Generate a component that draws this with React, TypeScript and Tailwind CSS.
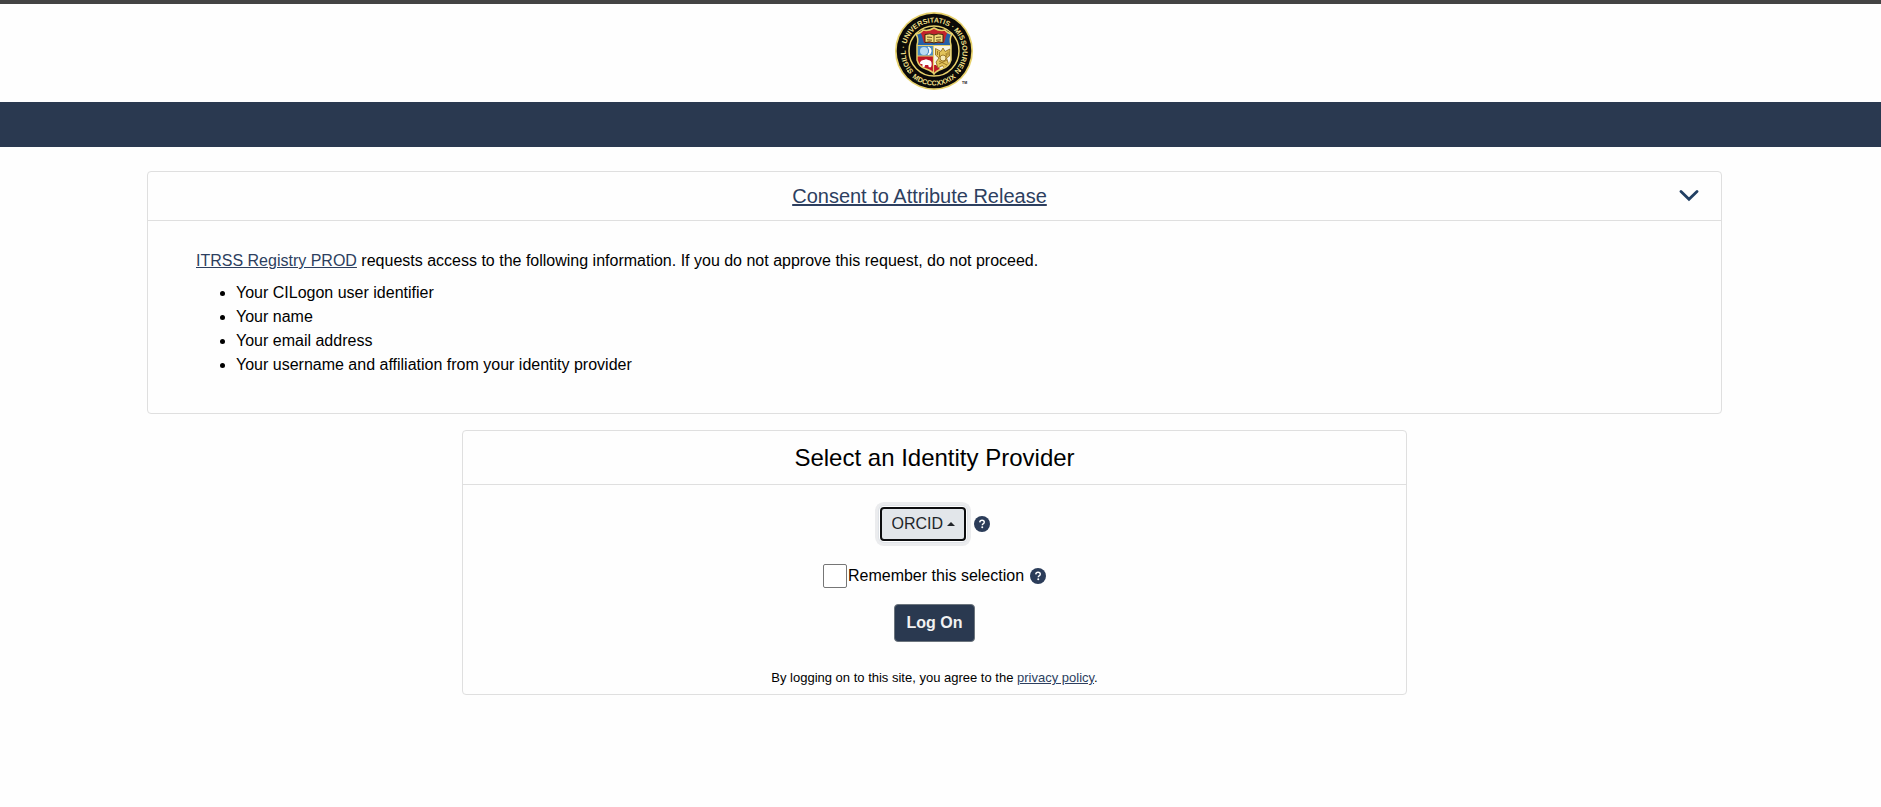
import { useState, type ReactNode } from 'react'

const attributes = [
    'Your CILogon user identifier',
    'Your name',
    'Your email address',
    'Your username and affiliation from your identity provider',
]

function Seal() {
    return (
        <svg viewBox="0 0 78 78" className="size-[78px]" role="img" aria-label="University of Missouri seal">
            <defs>
                <path id="ring-top" d="M39 39 m-17.5 22.5 a28.5 28.5 0 1 1 35 0" />
                <path id="ring-bottom" d="M11 59 A34.4 34.4 0 0 0 67 59" />
                <clipPath id="shield">
                    <path d="M21 22 Q26 21 28 18 Q33 19.500 39 16 Q45 19.500 50 18 Q52 21 57 22 Q54 27 56 33 L56 48 Q54 55 47 57 Q41 59 39 62 Q37 59 31 57 Q24 55 22 48 L22 33 Q24 27 21 22 Z" />
                </clipPath>
            </defs>
            <circle cx="39" cy="39" r="39" fill="#e6d06a" />
            <circle cx="39" cy="39" r="37.300" fill="#0b0a08" />
            <circle cx="39" cy="39" r="25" fill="none" stroke="#e6d06a" strokeWidth="1.500" />
            <g fill="#f3e08a" fontFamily="Liberation Sans, sans-serif" fontWeight="700" fontSize="7.100">
                <text textAnchor="middle">
                    <textPath href="#ring-top" startOffset="50%">SIGILL · UNIVERSITATIS · MISSOURIEN</textPath>
                </text>
                <text textAnchor="middle">
                    <textPath href="#ring-bottom" startOffset="50%">MDCCCXXXIX</textPath>
                </text>
            </g>
            <circle cx="13" cy="59" r="1" fill="#ead77c" />
            <circle cx="65" cy="59" r="1" fill="#ead77c" />

            <g>
                <g clipPath="url(#shield)">
                    <rect x="18" y="14" width="42" height="50" fill="#f8f4e6" />
                    <rect x="18" y="14" width="42" height="19" fill="#2660a8" />
                    <path d="M23 14 H55 L51 24 L49 31 H29 L27 24 Z" fill="#c3242d" />
                    <rect x="18" y="34" width="20" height="10" fill="#4a8cc6" />
                    <rect x="18" y="44" width="20" height="20" fill="#bd1826" />
                    <path d="M38 53 h3 l6 6 -8 4 z" fill="#bd1826" />
                </g>
                <path d="M30 22.500 Q35 21 39 23 Q43 21 48 22.500 V30.500 Q43 29 39 31 Q35 29 30 30.500 Z" fill="#f5de7c" stroke="#3a2c0c" strokeWidth="1" />
                <path d="M39 22.500 V31 M32 25 l5 .4 M41 25.400 l5 -.4 M32 27.800 l5 .4 M41 28.200 l5 -.4" stroke="#5b4514" strokeWidth="0.900" />
                <circle cx="29" cy="39" r="4" fill="#b9dbf2" />
                <path d="M33 35 A4 4 0 0 1 33 42.800 A6 6 0 0 0 33 35 Z" fill="#fff" stroke="#fff" />
                <path d="M25 50.500 q1-3 4-2.500 q2-1.500 4 0 q3 0 3.500 2.500 q.5 2-.5 4.800 h-2.200 l-.6-2.200 h-3 l-.8 2.200 h-2 v-3.300 q-3 0-2.400-1.500 Z" fill="#fff" />
                <g fill="none" stroke="#94711f" strokeWidth="0.900">
                    <path d="M40.500 36.500 L46 39.500 L48 36 L50 39.500 L55 37 L54.500 44 L51.500 46 L53.500 52 L49 56 L47.500 53.500 L43 56 L41 50 L44 46 L40.500 43 Z" fill="#e3c45a" />
                    <path d="M42.500 39 v4 M44.500 40 v5 M53 39.500 v4 M51.200 41 v4 M44 49 l8 4 M52 48 l-8 4" />
                    <circle cx="48" cy="46" r="3" fill="#f6eab4" />
                </g>
                <path d="M22 33.500 H56 M38.500 33.500 V61 M22 44 H38" stroke="#e6d06a" strokeWidth="1.200" fill="none" />
                <path d="M21 22 Q26 21 28 18 Q33 19.500 39 16 Q45 19.500 50 18 Q52 21 57 22 Q54 27 56 33 L56 48 Q54 55 47 57 Q41 59 39 62 Q37 59 31 57 Q24 55 22 48 L22 33 Q24 27 21 22 Z" fill="none" stroke="#e6d06a" strokeWidth="1.500" />
            </g>
            <text x="67" y="71.500" fontFamily="Liberation Sans, sans-serif" fontWeight="700" fontSize="3.500" fill="#111">TM</text>
        </svg>
    )
}

function HelpButton({ label }: { label: string }) {
    return (
        <button type="button" aria-label={label} className="shrink-0">
            <svg viewBox="0 0 512 512" className="size-4" fill="#2b3c59">
                <circle cx="256" cy="256" r="256" />
                <path d="M184 202 q6-66 74-66 q70 0 70 60 q0 36-36 56 q-26 15-26 44" fill="none" stroke="#fff" strokeWidth="46" />
                <circle cx="264" cy="362" r="32" fill="#fff" />
            </svg>
        </button>
    )
}

function Card({ header, className, children }: { header: ReactNode; className?: string; children: ReactNode }) {
    return (
        <section className={'rounded border border-[#dfdfdf] ' + (className ?? '')}>
            <header className="border-b border-[#dfdfdf]">{header}</header>
            {children}
        </section>
    )
}

export default function App() {
    const [open, setOpen] = useState(true)
    const [remember, setRemember] = useState(false)

    return (
        <div className="min-h-screen bg-[#fefefe] font-['Liberation_Sans',Arial,sans-serif] text-base text-black">
            <div className="h-1 bg-[#444]" />
            <div className="flex h-[98px] justify-center pt-2 pr-3.5">
                <Seal />
            </div>
            <div className="h-[45px] bg-[#2a3950]" />

            <main className="flex flex-col gap-4 pt-6 pr-[159px] pl-[147px]">
                <Card
                    header={
                        <div className="flex h-12 items-center pl-3">
                            <h2 className="flex-1 text-center text-xl text-[#2d3f5f]">
                                <a href="#attributes" className="underline">Consent to Attribute Release</a>
                            </h2>
                            <button
                                type="button"
                                aria-label="Toggle attributes"
                                aria-expanded={open}
                                onClick={() => setOpen(!open)}
                                className="mr-[22px]"
                            >
                                <svg viewBox="0 0 20 12" className="h-3 w-5" fill="none" stroke="#213f63" strokeWidth="2.800">
                                    <path d="M2 1.500 L10 9.300 L18 1.500" strokeLinecap="round" />
                                </svg>
                            </button>
                        </div>
                    }
                >
                    {open && (
                        <div id="attributes" className="px-12 pt-7 pb-9">
                            <p className="mb-2">
                                <a href="#registry" className="text-[#2d3f5f] underline">ITRSS Registry PROD</a> requests access to the
                                following information. If you do not approve this request, do not proceed.
                            </p>
                            <ul className="list-disc pl-10">
                                {attributes.map(item => <li key={item}>{item}</li>)}
                            </ul>
                        </div>
                    )}
                </Card>

                <Card
                    className="w-3/5 self-center"
                    header={<h1 className="pt-[11px] pb-2.5 text-center text-2xl leading-8">Select an Identity Provider</h1>}
                >
                    <form className="flex flex-col items-center pt-[22px]" onSubmit={e => e.preventDefault()}>
                        <div className="flex items-center gap-2">
                            <div className="grid items-center">
                                <select
                                    aria-label="Identity provider"
                                    className="col-start-1 row-start-1 h-[34px] w-[86px] appearance-none rounded border-2 border-[#0c0d0f] bg-[#e2e6ea] pl-2.5 text-[#212529] shadow-[0_0_0_1px_#fff,0_0_0_2px_#dfe3e8,0_0_0_5px_#ebecee] outline-none"
                                >
                                    <option>ORCID</option>
                                </select>
                                <svg viewBox="0 0 8 4" className="pointer-events-none relative col-start-1 row-start-1 mr-[11px] h-1 w-2 justify-self-end" fill="#212529">
                                    <path d="M0 4 L4 0 L8 4 Z" />
                                </svg>
                            </div>
                            <HelpButton label="About identity providers" />
                        </div>

                        <div className="mt-[23px] flex items-center">
                            <input
                                id="remember"
                                type="checkbox"
                                checked={remember}
                                onChange={e => setRemember(e.target.checked)}
                                className="size-6 appearance-none rounded-xs border border-[#767676] bg-white checked:bg-[#2a3950]"
                            />
                            <label htmlFor="remember" className="mr-1.5 ml-px">Remember this selection</label>
                            <HelpButton label="About remembering this selection" />
                        </div>

                        <button type="submit" className="mt-4 h-[38px] rounded border border-[#6c757d] bg-[#2a3950] px-3 font-bold text-[#f2f2f2]">
                            Log On
                        </button>

                        <p className="mt-[26px] mb-1.5 text-[13px] leading-5">
                            By logging on to this site, you agree to the{' '}
                            <a href="#privacy" className="text-[#2d3f5f] underline">privacy policy</a>.
                        </p>
                    </form>
                </Card>
            </main>
        </div>
    )
}
